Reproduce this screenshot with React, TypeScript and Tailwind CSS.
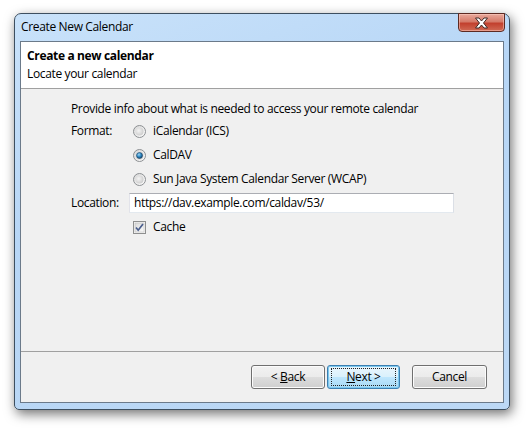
import React from 'react';

const FONT = { fontFamily: '"Segoe UI", "Open Sans", "Noto Sans", sans-serif' };

function Radio({ checked }: { checked?: boolean }) {
  return (
    <svg width="13" height="13" viewBox="0 0 13 13" className="shrink-0">
      <defs>
        <linearGradient id="rOuter" x1="0" y1="0" x2="1" y2="1">
          <stop offset="0" stopColor="#d6d6d6" />
          <stop offset="1" stopColor="#ffffff" />
        </linearGradient>
        <radialGradient id="rInner" cx="0.4" cy="0.4" r="0.7">
          <stop offset="0" stopColor="#f4f4f4" />
          <stop offset="1" stopColor="#c9c9c9" />
        </radialGradient>
        <radialGradient id="rDot" cx="0.4" cy="0.35" r="0.7">
          <stop offset="0" stopColor="#9fd7f5" />
          <stop offset="0.5" stopColor="#2f89c4" />
          <stop offset="1" stopColor="#0f3e66" />
        </radialGradient>
      </defs>
      <circle cx="6.5" cy="6.5" r="6" fill="url(#rOuter)" stroke="#8c8f92" />
      <circle cx="6.5" cy="6.5" r="4" fill="url(#rInner)" />
      {checked && <circle cx="6.5" cy="6.5" r="3" fill="url(#rDot)" stroke="#1d4466" strokeWidth="0.6" />}
    </svg>
  );
}

function Checkbox() {
  return (
    <svg width="13" height="13" viewBox="0 0 13 13" className="shrink-0">
      <defs>
        <linearGradient id="cbIn" x1="0" y1="0" x2="1" y2="1">
          <stop offset="0" stopColor="#d9d9d9" />
          <stop offset="1" stopColor="#fbfbfb" />
        </linearGradient>
      </defs>
      <rect x="0.5" y="0.5" width="12" height="12" fill="#f4f4f4" stroke="#8e8f8f" />
      <rect x="2" y="2" width="9" height="9" fill="url(#cbIn)" stroke="#b8b8b8" strokeWidth="0.5" />
      <path d="M3 6.5 L5.2 9.2 L10 3" fill="none" stroke="#4a5e8d" strokeWidth="1.7" />
    </svg>
  );
}

function WinButton({ children, primary, width }: { children: React.ReactNode; primary?: boolean; width: string }) {
  return (
    <div
      className={`${width} h-6 rounded-[3px] border flex items-center justify-center text-[12px] text-black ${
        primary
          ? 'border-[#3c7fb1] bg-[linear-gradient(#eaf6fd_0%,#d9f0fc_50%,#bee6fd_51%,#a7d9f5_100%)] shadow-[inset_0_0_0_1px_#7cc8ee]'
          : 'border-[#707070] bg-[linear-gradient(#f2f2f2_0%,#ebebeb_50%,#dddddd_51%,#cfcfcf_100%)] shadow-[inset_0_0_0_1px_#fcfcfc]'
      }`}
    >
      {primary ? (
        <span className="block w-[65px] h-[18px] leading-[17px] text-center outline outline-1 outline-dotted outline-[#222] outline-offset-[-1px]">
          {children}
        </span>
      ) : (
        children
      )}
    </div>
  );
}

export default function App() {
  return (
    <div className="w-[528px] h-[429px] bg-white pt-[13px] pl-[14px] tracking-[-0.35px]" style={FONT}>
      {/* window frame */}
      <div className="w-[496px] h-[397px] rounded-t-[7px] rounded-b-[5px] border border-[#3d4f60] bg-[linear-gradient(160deg,#c9e2fa_0%,#b7d6f6_40%,#bcd8f5_100%)] shadow-[2px_4px_12px_rgba(0,0,0,0.55)] flex flex-col px-[5px] pb-[6px]">
        {/* title bar */}
        <div className="h-[27px] flex items-start justify-between">
          <div className="text-[12px] text-black pl-[1px] pt-[4px] leading-[18px]">Create New Calendar</div>
          <div className="-mt-px w-[47px] h-[19px] rounded-b-[4px] border border-[#5d2a22] bg-[linear-gradient(#e9a99c_0%,#d57a69_45%,#c2402e_55%,#d06a55_100%)] shadow-[inset_0_0_0_1px_rgba(255,210,200,0.5)] flex items-center justify-center -mr-px">
            <svg width="15" height="12" viewBox="0 0 15 12">
              <path
                d="M1.5 1 H5 L7.5 4 L10 1 H13.5 L9.5 6 L13.5 11 H10 L7.5 8 L5 11 H1.5 L5.5 6 Z"
                fill="#ffffff"
                stroke="#3e2a27"
                strokeWidth="1"
                strokeLinejoin="round"
              />
            </svg>
          </div>
        </div>

        {/* client area */}
        <div className="flex-1 border border-[#6b7a8a] bg-[#f0f0f0] flex flex-col text-[12px] text-black">
          {/* header */}
          <div className="h-[47px] bg-white border-b border-[#a0a0a0] pl-[6px] pt-[5px]">
            <div className="font-bold leading-[18px]">Create a new calendar</div>
            <div className="leading-[18px]">Locate your calendar</div>
          </div>

          {/* body */}
          <div className="flex-1 pl-[50px] pt-[12px]">
            <div className="leading-4">Provide info about what is needed to access your remote calendar</div>
            <div className="mt-[2px] grid grid-cols-[58px_1fr]">
              <div className="h-6 flex items-center">Format:</div>
              <div className="flex flex-col">
                <div className="h-6 flex items-center gap-[7px] pl-1">
                  <Radio />
                  <span>iCalendar (ICS)</span>
                </div>
                <div className="h-6 flex items-center gap-[7px] pl-1">
                  <Radio checked />
                  <span>CalDAV</span>
                </div>
                <div className="h-6 flex items-center gap-[7px] pl-1">
                  <Radio />
                  <span>Sun Java System Calendar Server (WCAP)</span>
                </div>
              </div>
              <div className="h-6 flex items-center">Location:</div>
              <div className="h-6 flex items-center">
                <div className="w-[325px] h-5 bg-white border border-[#abadb3] border-l-[#e2e3ea] border-r-[#dbdfe6] border-b-[#e3e9ef] flex items-center pl-[4px]">
                  https://dav.example.com/caldav/53/
                </div>
              </div>
              <div />
              <div className="h-6 flex items-center gap-[7px] pl-1">
                <Checkbox />
                <span>Cache</span>
              </div>
            </div>
          </div>

          {/* footer */}
          <div className="h-[51px] border-t border-[#a0a0a0] flex items-start justify-end pt-[13px] pr-[16px]">
            <WinButton width="w-[74px]">
              <span>
                &lt; <span className="underline">B</span>ack
              </span>
            </WinButton>
            <div className="ml-[2px]">
              <WinButton primary width="w-[73px]">
                <span className="underline">N</span>ext &gt;
              </WinButton>
            </div>
            <div className="ml-[12px]">
              <WinButton width="w-[75px]">Cancel</WinButton>
            </div>
          </div>
        </div>
      </div>
    </div>
  );
}
